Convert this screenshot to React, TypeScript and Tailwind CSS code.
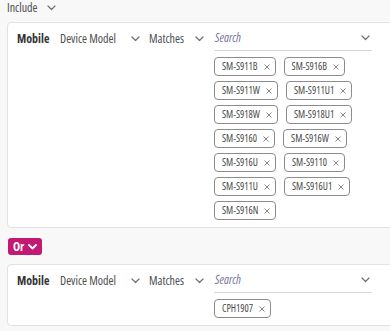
const firstModels = [
  "SM-S911B",
  "SM-S916B",
  "SM-S911W",
  "SM-S911U1",
  "SM-S918W",
  "SM-S918U1",
  "SM-S9160",
  "SM-S916W",
  "SM-S916U",
  "SM-S9110",
  "SM-S911U",
  "SM-S916U1",
  "SM-S916N",
];

function Chevron({ className = "stroke-[#707070]", weight = 1.2 }: { className?: string; weight?: number }) {
  return (
    <svg width="9" height="6" viewBox="0 0 9 6" fill="none" className={className}>
      <polyline points="1,1 4.5,4.5 8,1" strokeWidth={weight} strokeLinecap="round" strokeLinejoin="round" />
    </svg>
  );
}

function Chip({ label }: { label: string }) {
  return (
    <span className="inline-flex h-[19px] shrink-0 items-center gap-[6px] whitespace-nowrap rounded-[4px] border border-[#8c8c8c] bg-white pl-[7px] pr-[5px] text-[10px] font-medium text-[#4a4a4a]">
      {label}
      <svg width="6" height="6" viewBox="0 0 6 6" className="stroke-[#8a8a8a]">
        <path d="M0.5 0.5 L5.5 5.5 M5.5 0.5 L0.5 5.5" strokeWidth="1" />
      </svg>
    </span>
  );
}

function Rule({ models }: { models: string[] }) {
  return (
    <div className="w-[410px] rounded-[4px] border border-[#e2e2e2] bg-white pb-[7px] pl-[9px]">
      <div className="flex items-start whitespace-nowrap text-[12px] text-[#4d4d4d]">
        <div className="flex h-[28px] w-[43px] shrink-0 items-center pt-[3px] font-bold text-[#333333]">
          Mobile
        </div>
        <div className="flex h-[28px] w-[89px] shrink-0 items-center pt-[3px]">
          <span className="w-[71px]">Device Model</span>
          <Chevron />
        </div>
        <div className="flex h-[28px] w-[65px] shrink-0 items-center pt-[3px]">
          <span className="w-[46px]">Matches</span>
          <Chevron />
        </div>
        <div className="flex w-[158px] shrink-0 flex-col">
          <div className="flex h-[28px] items-center justify-between border-b border-[#d8d8d8] pl-[1px] pr-[2px] pt-[3px]">
            <span className="italic text-[#75759a]">Search</span>
            <Chevron />
          </div>
          <div className="mt-[6px] flex flex-wrap gap-x-[8px] gap-y-[5px]">
            {models.map((m) => (
              <Chip key={m} label={m} />
            ))}
          </div>
        </div>
      </div>
    </div>
  );
}

export default function App() {
  return (
    <div className="h-[331px] w-[390px] overflow-hidden bg-[#f8f8f8] px-[7px] font-['Open_Sans',sans-serif] font-stretch-[75%]">
      <div className="flex h-[16px] items-center text-[12px] text-[#4d4d4d]">
        <span className="w-[40px]">Include</span>
        <Chevron />
      </div>
      <div className="mt-[6px]">
        <Rule models={firstModels} />
      </div>
      <div className="mt-[10px] pl-[1px]">
        <button className="flex h-[17px] items-center gap-[4px] rounded-[3px] bg-[#c21a74] pl-[5px] pr-[5px] text-[12px] font-bold text-white">
          Or
          <Chevron className="stroke-white" weight={1.8} />
        </button>
      </div>
      <div className="mt-[9px]">
        <Rule models={["CPH1907"]} />
      </div>
    </div>
  );
}
